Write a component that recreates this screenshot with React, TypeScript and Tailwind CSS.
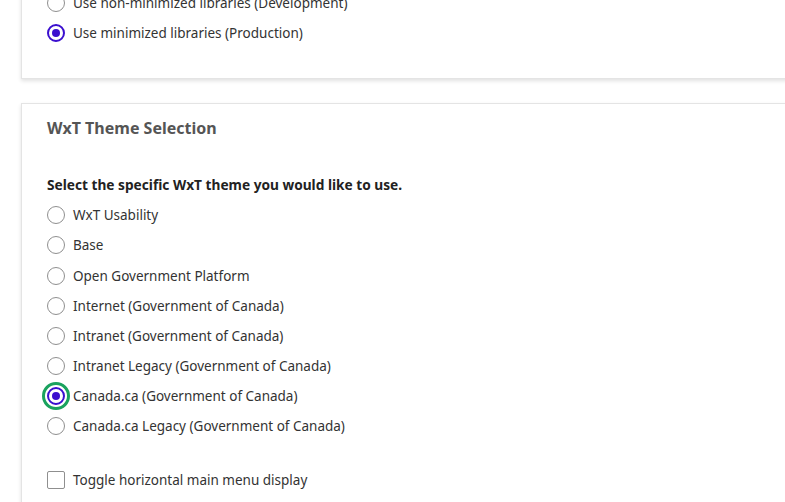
import { useState } from "react"

const themes = [
  "WxT Usability",
  "Base",
  "Open Government Platform",
  "Internet (Government of Canada)",
  "Intranet (Government of Canada)",
  "Intranet Legacy (Government of Canada)",
  "Canada.ca (Government of Canada)",
  "Canada.ca Legacy (Government of Canada)",
]

const Radio = ({ checked, focused }: { checked: boolean; focused?: boolean }) => (
  <span
    className={`flex size-[18px] shrink-0 items-center justify-center rounded-full bg-white ${
      checked ? "border-2 border-[#3b0fcf]" : "border border-[#8f8f8f]"
    } ${focused ? "outline-[3px] outline-solid outline-[#1aa25e] outline-offset-[2px]" : ""}`}
  >
    {checked && <span className="size-[8px] rounded-full bg-[#3b0fcf]" />}
  </span>
)

const Row = ({ label, checked, focused, onClick }: { label: string; checked: boolean; focused?: boolean; onClick?: () => void }) => (
  <label onClick={onClick} className="flex h-[30.15px] cursor-pointer items-center gap-[8px]">
    <Radio checked={checked} focused={focused} />
    <span className="text-[13.5px] text-[#333]">{label}</span>
  </label>
)

export default function App() {
  const [lib, setLib] = useState(1)
  const [theme, setTheme] = useState(6)
  const [horizontal, setHorizontal] = useState(false)

  return (
    <div
      className="h-[502px] overflow-hidden bg-white pl-[21px]"
      style={{ fontFamily: "'Noto Sans', 'Open Sans', sans-serif" }}
    >
      {/* Library card */}
      <section className="-mt-[12px] -mr-[20px] border border-t-0 border-[#e4e4e4] pb-[30px] pl-[25px] shadow-[0_2px_4px_rgba(0,0,0,0.12)]">
        <Row label="Use non-minimized libraries (Development)" checked={lib === 0} onClick={() => setLib(0)} />
        <Row label="Use minimized libraries (Production)" checked={lib === 1} onClick={() => setLib(1)} />
      </section>

      {/* Theme card */}
      <section className="mt-[24px] -mr-[20px] border border-[#e4e4e4] pb-[30px] pl-[25px] shadow-[0_2px_4px_rgba(0,0,0,0.12)]">
        <h2 className="pt-[12px] text-[16px] leading-[24px] font-bold text-[#555]">WxT Theme Selection</h2>

        <p className="mt-[34px] text-[13.7px] leading-[22px] font-bold text-[#222]">
          Select the specific WxT theme you would like to use.
        </p>

        <div className="mt-[4px] flex flex-col">
          {themes.map((t, i) => (
            <Row key={t} label={t} checked={theme === i} focused={theme === i && i === 6} onClick={() => setTheme(i)} />
          ))}
        </div>

        <label
          onClick={() => setHorizontal(!horizontal)}
          className="mt-[24px] flex h-[30px] cursor-pointer items-center gap-[8px]"
        >
          <span className="flex size-[18px] items-center justify-center rounded-[2px] border border-[#8f8f8f] bg-white text-[12px] text-[#3b0fcf]">
            {horizontal ? "✓" : ""}
          </span>
          <span className="text-[13.5px] text-[#333]">Toggle horizontal main menu display</span>
        </label>
      </section>
    </div>
  )
}
